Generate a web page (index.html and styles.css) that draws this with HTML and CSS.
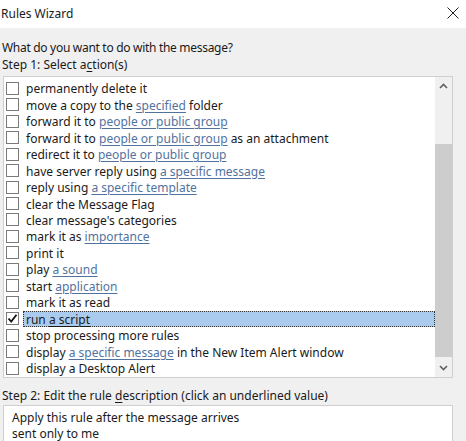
FILE: index.html
```html
<!DOCTYPE html>
<html>
<head>
<meta charset="utf-8">
<link rel="stylesheet" href="styles.css">
</head>
<body>
<div class="window">
  <div class="titlebar">
    <span class="title">Rules Wizard</span>
    <svg class="close" width="12" height="12" viewBox="0 0 12 12"><path d="M0.5 0.5 L11.5 11.5 M11.5 0.5 L0.5 11.5" stroke="#222" stroke-width="1" fill="none"/></svg>
  </div>
  <div class="content">
    <div class="prompt">What do you want to do with the message?</div>
    <div class="label step1">Step 1: Select a<u>c</u>tion(s)</div>
    <div class="listbox">
      <div class="items">
        <div class="row"><span class="cb"></span><span class="txt">permanently delete it</span></div>
        <div class="row"><span class="cb"></span><span class="txt">move a copy to the <a>specified</a> folder</span></div>
        <div class="row"><span class="cb"></span><span class="txt">forward it to <a>people or public group</a></span></div>
        <div class="row"><span class="cb"></span><span class="txt">forward it to <a>people or public group</a> as an attachment</span></div>
        <div class="row"><span class="cb"></span><span class="txt">redirect it to <a>people or public group</a></span></div>
        <div class="row"><span class="cb"></span><span class="txt">have server reply using <a>a specific message</a></span></div>
        <div class="row"><span class="cb"></span><span class="txt">reply using <a>a specific template</a></span></div>
        <div class="row"><span class="cb"></span><span class="txt">clear the Message Flag</span></div>
        <div class="row"><span class="cb"></span><span class="txt">clear message's categories</span></div>
        <div class="row"><span class="cb"></span><span class="txt">mark it as <a>importance</a></span></div>
        <div class="row"><span class="cb"></span><span class="txt">print it</span></div>
        <div class="row"><span class="cb"></span><span class="txt">play <a>a sound</a></span></div>
        <div class="row"><span class="cb"></span><span class="txt">start <a>application</a></span></div>
        <div class="row"><span class="cb"></span><span class="txt">mark it as read</span></div>
        <div class="row selected"><span class="cb checked"><svg width="11" height="11" viewBox="0 0 11 11"><path d="M1.5 5.5 L4.2 8.5 L9.5 1.8" stroke="#111" stroke-width="1.8" fill="none"/></svg></span><span class="txt">run <a>a script</a></span></div>
        <div class="row"><span class="cb"></span><span class="txt">stop processing more rules</span></div>
        <div class="row"><span class="cb"></span><span class="txt">display <a>a specific message</a> in the New Item Alert window</span></div>
        <div class="row"><span class="cb"></span><span class="txt">display a Desktop Alert</span></div>
      </div>
      <div class="scrollbar">
        <div class="arrow"><svg width="9" height="6" viewBox="0 0 9 6"><path d="M1 5 L4.5 1.5 L8 5" stroke="#606060" stroke-width="1.6" fill="none"/></svg></div>
        <div class="track-top"></div>
        <div class="thumb"></div>
        <div class="track-bottom"></div>
        <div class="arrow"><svg width="9" height="6" viewBox="0 0 9 6"><path d="M1 1 L4.5 4.5 L8 1" stroke="#606060" stroke-width="1.6" fill="none"/></svg></div>
      </div>
    </div>
    <div class="label step2">Step 2: Edit the rule <u>d</u>escription (click an underlined value)</div>
    <div class="descbox">
      <div class="dline">Apply this rule after the message arrives</div>
      <div class="dline">sent only to me</div>
    </div>
  </div>
</div>
</body>
</html>
```
FILE: styles.css
```css
html, body {
  margin: 0;
  padding: 0;
}
body {
  width: 466px;
  height: 441px;
  overflow: hidden;
  font-family: "Noto Sans", "Open Sans", sans-serif;
  font-size: 12px;
  color: #1a1a1a;
  background: #f0f0f0;
}
.window {
  width: 466px;
  height: 441px;
  display: flex;
  flex-direction: column;
}
.titlebar {
  height: 28px;
  background: #ffffff;
  display: flex;
  align-items: center;
  justify-content: space-between;
  padding: 0 7px 0 1px;
  flex: none;
}
.title {
  font-size: 12px;
  color: #1a1a1a;
  margin-top: -2px;
}
.close {
  margin-top: -3px;
}
.content {
  flex: 1;
  background: #f0f0f0;
  padding: 11px 13px 0 2px;
  display: flex;
  flex-direction: column;
}
.prompt {
  line-height: 17px;
  height: 17px;
  letter-spacing: -0.3px;
}
.label {
  line-height: 17px;
  height: 17px;
}
.step1 {
  margin-bottom: 3px;
}
u {
  text-decoration-thickness: 1px;
  text-underline-offset: 2px;
}
.listbox {
  margin-left: 1px;
  height: 301.5px;
  border: 1px solid #cfcfcf;
  background: #ffffff;
  display: flex;
  flex: none;
  box-sizing: border-box;
}
.items {
  flex: 1;
  padding-top: 3px;
}
.row {
  height: 16.47px;
  display: flex;
  align-items: center;
}
.cb {
  width: 11px;
  height: 11px;
  border: 1px solid #7a7a7a;
  background: #fff;
  margin-left: 2px;
  margin-right: 4px;
  flex: none;
  display: flex;
  align-items: center;
  justify-content: center;
}
.txt {
  flex: 1;
  height: 16px;
  line-height: 15px;
  padding-left: 2px;
  white-space: nowrap;
  box-sizing: border-box;
  border: 1px solid transparent;
}
.selected .txt {
  background: #aacbed;
  border: 1px dotted #333;
}
.selected .txt a {
  color: #1a1a1a;
  text-decoration-color: #1a1a1a;
}
a {
  color: #52729e;
  text-decoration: underline;
  text-decoration-thickness: 1px;
  text-underline-offset: 2px;
}
.scrollbar {
  width: 17px;
  flex: none;
  display: flex;
  flex-direction: column;
  background: #f0f0f0;
}
.arrow {
  height: 17px;
  display: flex;
  align-items: center;
  justify-content: center;
  flex: none;
}
.track-top {
  height: 50px;
  flex: none;
}
.thumb {
  height: 213px;
  background: #cdcdcd;
  flex: none;
}
.track-bottom {
  flex: 1;
}
.step2 {
  margin-top: 9px;
}
.descbox {
  margin-left: 1px;
  margin-top: 1px;
  flex: 1;
  background: #ffffff;
  border: 1px solid #cfcfcf;
  border-bottom: none;
  padding: 4px 0 0 8px;
}
.dline {
  line-height: 16.5px;
}
```
